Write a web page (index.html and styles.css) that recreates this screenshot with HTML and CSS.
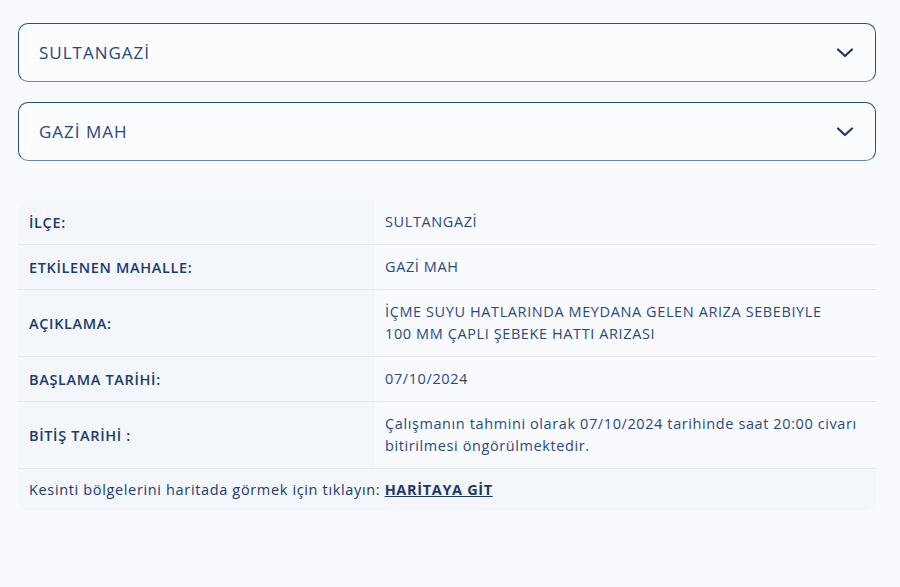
FILE: index.html
```html
<!DOCTYPE html>
<html lang="tr">
<head>
    <meta charset="UTF-8">
    <meta name="viewport" content="width=device-width, initial-scale=1.0">
    <title>Su Kesintileri</title>
    <link rel="stylesheet" href="styles.css">
</head>
<body>
    <div class="page">
        <div class="select-box">
            <span class="select-text">SULTANGAZİ</span>
            <svg class="chevron" width="18" height="10" viewBox="0 0 18 10"><path d="M2 1.5 L9 8 L16 1.5" fill="none" stroke="#1b3a6b" stroke-width="2.2" stroke-linecap="round" stroke-linejoin="round"/></svg>
        </div>
        <div class="select-box">
            <span class="select-text">GAZİ MAH</span>
            <svg class="chevron" width="18" height="10" viewBox="0 0 18 10"><path d="M2 1.5 L9 8 L16 1.5" fill="none" stroke="#1b3a6b" stroke-width="2.2" stroke-linecap="round" stroke-linejoin="round"/></svg>
        </div>

        <div class="info-table">
            <div class="row">
                <div class="label">İLÇE:</div>
                <div class="value">SULTANGAZİ</div>
            </div>
            <div class="row">
                <div class="label">ETKİLENEN MAHALLE:</div>
                <div class="value">GAZİ MAH</div>
            </div>
            <div class="row">
                <div class="label">AÇIKLAMA:</div>
                <div class="value">İÇME SUYU HATLARINDA MEYDANA GELEN ARIZA SEBEBIYLE<br>100 MM ÇAPLI ŞEBEKE HATTI ARIZASI</div>
            </div>
            <div class="row">
                <div class="label">BAŞLAMA TARİHİ:</div>
                <div class="value">07/10/2024</div>
            </div>
            <div class="row">
                <div class="label">BİTİŞ TARİHİ :</div>
                <div class="value">Çalışmanın tahmini olarak 07/10/2024 tarihinde saat 20:00 civarı<br>bitirilmesi öngörülmektedir.</div>
            </div>
            <div class="footer">
                Kesinti bölgelerini haritada görmek için tıklayın: <a href="#" class="map-link">HARİTAYA GİT</a>
            </div>
        </div>
    </div>
</body>
</html>
```

FILE: styles.css
```css
body {
    margin: 0;
    background: #f9fafd;
    font-family: "Open Sans", "Noto Sans", sans-serif;
    color: #1e3f73;
}
.page {
    padding: 23px 24px 40px 18px;
}
.select-box {
    display: flex;
    align-items: center;
    justify-content: space-between;
    height: 57px;
    padding: 0 20px 0 20px;
    margin-bottom: 20px;
    border: 1px solid #2a4c86;
    border-bottom-color: #6a86b6;
    border-radius: 10px;
    background: #fbfcfe;
}
.select-text {
    font-size: 17px;
    color: #26477d;
    letter-spacing: 1px;
}
.chevron {
    margin-right: 1px;
}
.info-table {
    margin-top: 39px;
    border-radius: 12px;
    overflow: hidden;
    background: #f9fafd;
}
.row {
    display: grid;
    grid-template-columns: 357px 1fr;
    border-bottom: 1px solid #e3e7ed;
}
.label {
    display: flex;
    align-items: center;
    padding: 10px 11px;
    background: #f3f6fb;
    font-size: 14.5px;
    font-weight: 600;
    color: #1c3b6c;
    letter-spacing: 0.65px;
}
.value {
    padding: 11px 10px;
    font-size: 14.5px;
    line-height: 22px;
    color: #28497f;
    letter-spacing: 0.6px;
}
.footer {
    padding: 11px 11px;
    height: 20px;
    background: #f3f6fb;
    font-size: 14.5px;
    color: #1c3b6c;
    letter-spacing: 0.65px;
}
.map-link {
    color: #1c3b6c;
    font-weight: 700;
    text-decoration: underline;
}
```
